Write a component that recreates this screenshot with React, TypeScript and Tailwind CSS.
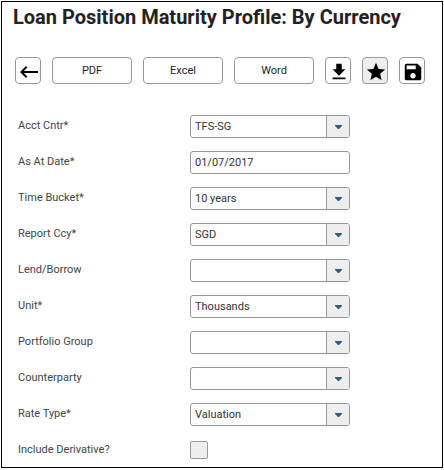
import { useState } from 'react'
import type { ReactNode } from 'react'
import { MdFileDownload, MdKeyboardBackspace, MdSave, MdStar } from 'react-icons/md'

type Field = {
  id: string
  label: string
  type: 'select' | 'text' | 'checkbox'
  value?: string
}

const fields: Field[] = [
  { id: 'acctCntr', label: 'Acct Cntr*', type: 'select', value: 'TFS-SG' },
  { id: 'asAtDate', label: 'As At Date*', type: 'text', value: '01/07/2017' },
  { id: 'timeBucket', label: 'Time Bucket*', type: 'select', value: '10 years' },
  { id: 'reportCcy', label: 'Report Ccy*', type: 'select', value: 'SGD' },
  { id: 'lendBorrow', label: 'Lend/Borrow', type: 'select', value: '' },
  { id: 'unit', label: 'Unit*', type: 'select', value: 'Thousands' },
  { id: 'portfolioGroup', label: 'Portfolio Group', type: 'select', value: '' },
  { id: 'counterparty', label: 'Counterparty', type: 'select', value: '' },
  { id: 'rateType', label: 'Rate Type*', type: 'select', value: 'Valuation' },
  { id: 'includeDerivative', label: 'Include Derivative?', type: 'checkbox' },
]

function TextButton({ children }: { children: ReactNode }) {
  return (
    <button
      type="button"
      className="h-[27px] w-20 rounded border border-[#999] bg-white pt-0.5 text-[11px] text-[#222] hover:bg-[#eee]"
    >
      {children}
    </button>
  )
}

function IconButton({ label, active, children }: { label: string; active?: boolean; children: ReactNode }) {
  return (
    <button
      type="button"
      aria-label={label}
      className={`flex h-[27px] w-[26px] shrink-0 items-center justify-center rounded border border-[#999] pt-0.5 pl-0.5 text-black ${
        active ? 'bg-[#eee]' : 'bg-white'
      }`}
    >
      {children}
    </button>
  )
}

function SelectField({ id, value }: { id: string; value: string }) {
  return (
    <div className="relative w-40">
      <select
        id={id}
        defaultValue={value}
        className="block h-[23px] w-full appearance-none rounded-[3px] border border-[#999] bg-white pt-0.5 pr-7 pl-1 text-[11px] text-[#333]"
      >
        <option value={value}>{value}</option>
      </select>
      <span className="pointer-events-none absolute inset-y-px right-px flex w-[23px] items-center justify-center rounded-r-xs border-l border-[#999] bg-[#eee]">
        <svg viewBox="0 0 7 4" className="h-1 w-[7px] fill-[#34617c]" aria-hidden="true">
          <path d="M0 0h7v1L4 4H3L0 1z" />
        </svg>
      </span>
    </div>
  )
}

function FormRow({ field }: { field: Field }) {
  const [checked, setChecked] = useState(false)

  return (
    <div className="flex h-9 items-start">
      <label htmlFor={field.id} className="w-[172px] pt-[3px] text-[11px] leading-4 text-[#444]">
        {field.label}
      </label>
      {field.type === 'select' && <SelectField id={field.id} value={field.value ?? ''} />}
      {field.type === 'text' && (
        <input
          id={field.id}
          type="text"
          defaultValue={field.value}
          className="h-[23px] w-40 rounded-[3px] border border-[#999] bg-white px-1 text-[11px] text-[#333]"
        />
      )}
      {field.type === 'checkbox' && (
        <input
          id={field.id}
          type="checkbox"
          checked={checked}
          onChange={(e) => setChecked(e.target.checked)}
          className="mt-0.5 h-[18px] w-[18px] appearance-none rounded-xs border border-[#999] bg-[#eee] checked:bg-[#34617c]"
        />
      )}
    </div>
  )
}

export default function App() {
  return (
    <div className="bg-white p-px font-['Roboto',sans-serif]">
      <main className="border border-black">
        <h1 className="px-[11px] pt-px text-xl leading-7 font-bold text-[#222]">
          Loan Position Maturity Profile: By Currency
        </h1>
        <div className="mt-[26px] flex gap-[11px] px-[13px]">
          <IconButton label="Back">
            <MdKeyboardBackspace className="h-6 w-6 shrink-0" />
          </IconButton>
          <TextButton>PDF</TextButton>
          <TextButton>Excel</TextButton>
          <TextButton>Word</TextButton>
          <IconButton label="Download">
            <MdFileDownload className="h-[22px] w-[22px] shrink-0" />
          </IconButton>
          <IconButton label="Favourite" active>
            <MdStar className="h-[22px] w-[22px] shrink-0" />
          </IconButton>
          <IconButton label="Save">
            <MdSave className="h-[22px] w-[22px] shrink-0" />
          </IconButton>
        </div>
        <form className="mt-[31px] -mb-2 px-4">
          {fields.map((field) => (
            <FormRow key={field.id} field={field} />
          ))}
        </form>
      </main>
    </div>
  )
}
